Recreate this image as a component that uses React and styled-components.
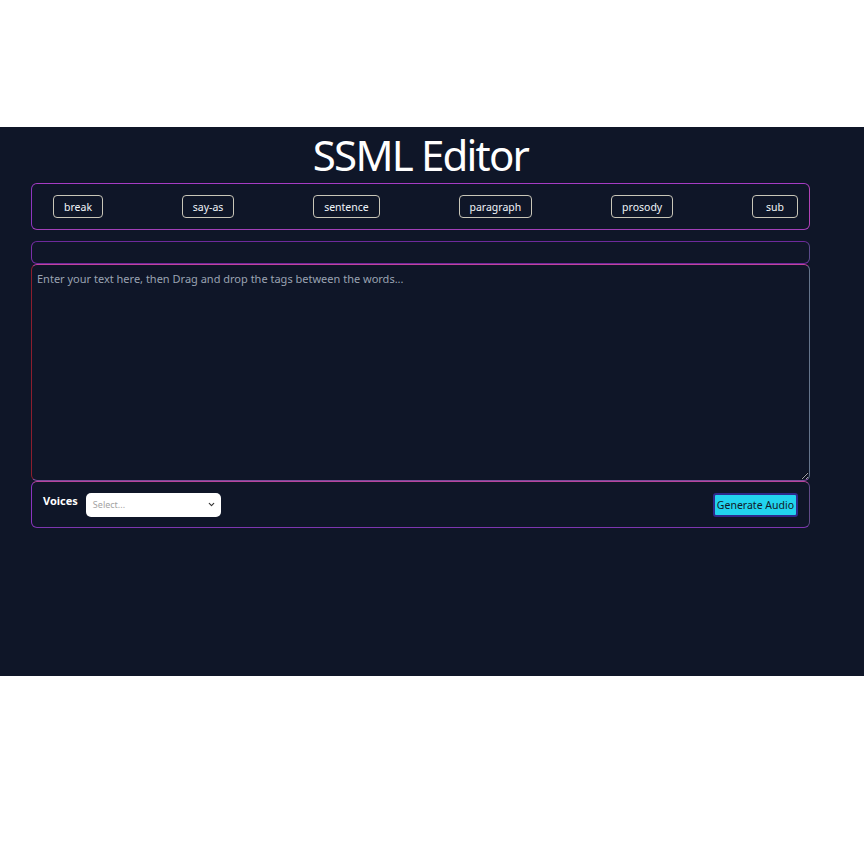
import React from "react";
import styled, { createGlobalStyle } from "styled-components";

const Global = createGlobalStyle`
  html, body { margin: 0; padding: 0; background: #ffffff; }
  body { font-family: "Noto Sans", "Open Sans", sans-serif; }
  * { box-sizing: border-box; }
`;

const Screen = styled.div`
  margin-top: 127px;
  height: 549px;
  background: #0f1628;
  padding: 0 54px 0 31px;
  display: flex;
  flex-direction: column;
`;

const Title = styled.h1`
  margin: 0;
  height: 56px;
  line-height: 56px;
  text-align: center;
  color: #ffffff;
  font-family: "Noto Sans", sans-serif;
  font-weight: 400;
  font-size: 42px;
  letter-spacing: -1.8px;
`;

const Panel = styled.div`
  border: 1px solid;
  border-color: ${(p) => p.$top} ${(p) => p.$right} ${(p) => p.$bottom} ${(p) => p.$left};
  border-radius: 6px;
  height: ${(p) => p.$h}px;
`;

const Toolbar = styled(Panel)`
  display: flex;
  align-items: center;
  justify-content: space-between;
  padding: 0 11px 0 21px;
  margin-bottom: 11px;
`;

const TagButton = styled.button`
  height: 23px;
  min-width: 46px;
  padding: 0 10px;
  border: 1px solid #c9c6b8;
  border-radius: 4px;
  background: #0f1628;
  color: #f1f5f9;
  font-family: "Noto Sans", sans-serif;
  font-size: 10.5px;
  cursor: grab;
`;

const Editor = styled.textarea`
  display: block;
  width: 100%;
  height: 217px;
  resize: vertical;
  background: #0f1628;
  border: 1px solid;
  border-color: #c1439c #64748b #7a4c9a #8b1e2e;
  border-radius: 6px;
  padding: 6px 5px;
  color: #e2e8f0;
  font-family: "Noto Sans", sans-serif;
  font-size: 11px;
  outline: none;
  &::placeholder { color: #9aa3b2; }
`;

const Footer = styled(Panel)`
  display: flex;
  align-items: center;
  justify-content: space-between;
  padding: 0 11px 0 11px;
`;

const VoiceGroup = styled.div`
  display: flex;
  align-items: center;
  gap: 8px;
`;

const Label = styled.label`
  color: #ffffff;
  font-weight: 700;
  font-size: 11px;
  margin-top: -8px;
`;

const SelectBox = styled.div`
  width: 135px;
  height: 24px;
  background: #ffffff;
  border-radius: 5px;
  display: flex;
  align-items: center;
  justify-content: space-between;
  padding: 0 5px 0 7px;
  color: #a3a3a3;
  font-size: 9px;
`;

const GenerateButton = styled.button`
  height: 24px;
  padding: 0 2px;
  background: #22d3ee;
  border: 2px solid #2e2a8c;
  border-radius: 3px;
  color: #111827;
  font-family: "Noto Sans", sans-serif;
  font-size: 10.5px;
`;

const tags = ["break", "say-as", "sentence", "paragraph", "prosody", "sub"];

export default function App() {
  return (
    <>
      <Global />
      <Screen>
        <Title>SSML Editor</Title>
        <Toolbar $h={47} $top="#a63cc4" $right="#b042b6" $bottom="#a23fb8" $left="#8e36c0">
          {tags.map((t) => (
            <TagButton key={t} draggable>{t}</TagButton>
          ))}
        </Toolbar>
        <Panel $h={23} $top="#6d2a9c" $right="#5b4a8a" $bottom="#6d2a9c" $left="#7a2fa8" />
        <Editor placeholder="Enter your text here, then Drag and drop the tags between the words..." />
        <Footer $h={47} $top="#b8449c" $right="#5f4a86" $bottom="#7d36b0" $left="#8a34c0">
          <VoiceGroup>
            <Label>Voices</Label>
            <SelectBox>
              <span>Select...</span>
              <svg width="9" height="9" viewBox="0 0 24 24" fill="none" stroke="#333" strokeWidth="3" strokeLinecap="round" strokeLinejoin="round">
                <path d="M6 9l6 6 6-6" />
              </svg>
            </SelectBox>
          </VoiceGroup>
          <GenerateButton>Generate Audio</GenerateButton>
        </Footer>
      </Screen>
    </>
  );
}
